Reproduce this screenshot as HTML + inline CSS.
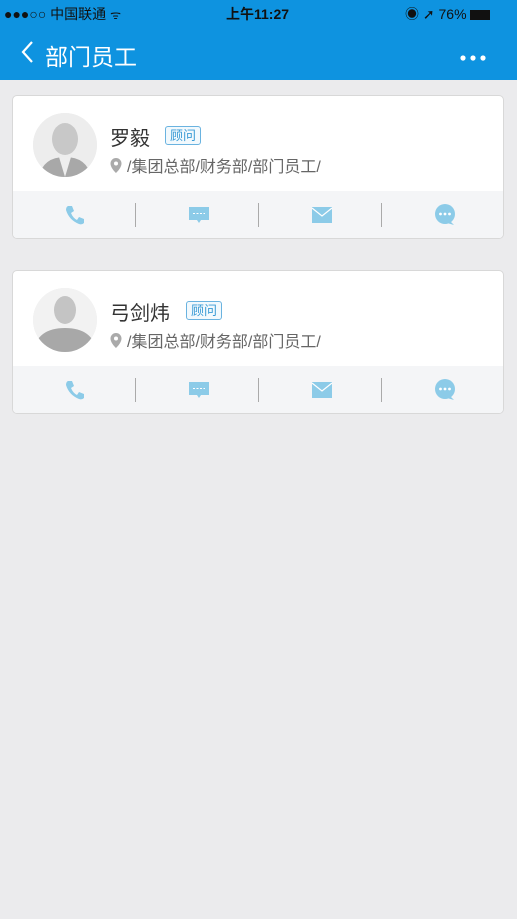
<!DOCTYPE html><html><head><meta charset="utf-8"><style>
body{margin:0;width:517px;height:919px;background:#ebebed;font-family:"Liberation Sans","Noto Sans CJK SC",sans-serif;position:relative;overflow:hidden}
.hdr{position:absolute;left:0;top:0;width:517px;height:80px;background:#0e93e0;color:#fff}
.sb{position:absolute;top:4px;font-size:14px;color:#111}
.card{position:absolute;left:12px;width:490px;height:142px;background:#fff;border:1px solid #d8d8d8;border-radius:5px;overflow:hidden}
.bot{position:absolute;left:0;top:95px;width:490px;height:47px;background:#f4f5f7}
.av{position:absolute;left:20px;top:17px;width:64px;height:64px;border-radius:50%;background:#eee;overflow:hidden}
.nm{position:absolute;top:26px;font-size:20px;color:#333}
.tag{position:absolute;top:30px;font-size:13px;color:#3a9bd5;border:1px solid #6ab3e0;border-radius:3px;padding:0 4px;line-height:17px;background:#f2f9fd}
.ad{position:absolute;left:97px;top:57px;font-size:16px;color:#666}
.dv{position:absolute;top:12px;width:1px;height:24px;background:#aaa}
.ic{position:absolute;top:12px}
</style></head><body>
<div class="hdr">
<div class="sb" style="left:4px">●●●○○ 中国联通 <span style="font-size:12px">ᯤ</span></div>
<div class="sb" style="left:226px;font-weight:bold">上午11:27</div>
<div class="sb" style="left:405px">◉ ➚ 76% <span style="display:inline-block;width:20px;height:10px;background:#111;vertical-align:middle"></span></div>
<svg style="position:absolute;left:20px;top:40px" width="14" height="24"><path d="M12 2 L3 12 L12 22" stroke="#fff" stroke-width="2.2" fill="none"/></svg>
<div style="position:absolute;left:45px;top:38px;font-size:23px">部门员工</div>
<div style="position:absolute;left:459px;top:49px;"><svg width="28" height="8"><circle cx="4" cy="4" r="2.6" fill="#fff"/><circle cx="14" cy="4" r="2.6" fill="#fff"/><circle cx="24" cy="4" r="2.6" fill="#fff"/></svg></div>
</div>

<div class="card" style="top:95px">
<div class="av"><svg width="64" height="64"><rect width="64" height="64" fill="#ededed"/><ellipse cx="32" cy="26" rx="13" ry="16" fill="#c8c8c8"/><path d="M6 64 Q10 44 32 44 Q54 44 58 64Z" fill="#a8a8a8"/><path d="M26 44 L32 64 L38 44Z" fill="#eee"/></svg></div>
<div class="nm" style="left:97px">罗毅</div><div class="tag" style="left:152px">顾问</div>
<div class="ad"><svg width="12" height="15" style="vertical-align:-1px;margin-right:5px"><path d="M6 0a5.5 5.5 0 0 0-5.5 5.5C.5 10 6 15 6 15s5.5-5 5.5-9.5A5.5 5.5 0 0 0 6 0z" fill="#aaa"/><circle cx="6" cy="5.5" r="2" fill="#fff"/></svg>/集团总部/财务部/部门员工/</div>
<div class="bot">
<svg class="ic" style="left:50px" width="24" height="24"><path d="M5 3 L9 3 L11 8 L8 10 Q10 15 14 17 L16 14 L21 16 L21 20 Q19 22 16 21 Q6 17 3 7 Q3 4 5 3Z" fill="#8ccbe8"/></svg>
<div class="dv" style="left:122px"></div>
<svg class="ic" style="left:174px" width="24" height="24"><path d="M2 4 H22 V17 H14 L12 20 L10 17 H2Z" fill="#8ccbe8"/><path d="M6 10.5 H18" stroke="#fff" stroke-dasharray="2 1.5"/></svg>
<div class="dv" style="left:245px"></div>
<svg class="ic" style="left:297px" width="24" height="24"><rect x="2" y="4" width="20" height="16" fill="#8ccbe8"/><path d="M2 5 L12 13 L22 5" stroke="#fff" fill="none" stroke-width="1.2"/></svg>
<div class="dv" style="left:368px"></div>
<svg class="ic" style="left:420px" width="24" height="24"><circle cx="12" cy="11" r="10" fill="#8ccbe8"/><path d="M17 18 L21 22 L14 20Z" fill="#8ccbe8"/><circle cx="7.5" cy="11" r="1.4" fill="#fff"/><circle cx="12" cy="11" r="1.4" fill="#fff"/><circle cx="16.5" cy="11" r="1.4" fill="#fff"/></svg>
</div></div>

<div class="card" style="top:270px">
<div class="av"><svg width="64" height="64"><rect width="64" height="64" fill="#f2f2f2"/><ellipse cx="32" cy="22" rx="11" ry="14" fill="#c4c4c4"/><path d="M0 64 Q4 40 32 40 Q60 40 64 64Z" fill="#a8a8a8"/></svg></div>
<div class="nm" style="left:97px">弓剑炜</div><div class="tag" style="left:173px">顾问</div>
<div class="ad"><svg width="12" height="15" style="vertical-align:-1px;margin-right:5px"><path d="M6 0a5.5 5.5 0 0 0-5.5 5.5C.5 10 6 15 6 15s5.5-5 5.5-9.5A5.5 5.5 0 0 0 6 0z" fill="#aaa"/><circle cx="6" cy="5.5" r="2" fill="#fff"/></svg>/集团总部/财务部/部门员工/</div>
<div class="bot">
<svg class="ic" style="left:50px" width="24" height="24"><path d="M5 3 L9 3 L11 8 L8 10 Q10 15 14 17 L16 14 L21 16 L21 20 Q19 22 16 21 Q6 17 3 7 Q3 4 5 3Z" fill="#8ccbe8"/></svg>
<div class="dv" style="left:122px"></div>
<svg class="ic" style="left:174px" width="24" height="24"><path d="M2 4 H22 V17 H14 L12 20 L10 17 H2Z" fill="#8ccbe8"/><path d="M6 10.5 H18" stroke="#fff" stroke-dasharray="2 1.5"/></svg>
<div class="dv" style="left:245px"></div>
<svg class="ic" style="left:297px" width="24" height="24"><rect x="2" y="4" width="20" height="16" fill="#8ccbe8"/><path d="M2 5 L12 13 L22 5" stroke="#fff" fill="none" stroke-width="1.2"/></svg>
<div class="dv" style="left:368px"></div>
<svg class="ic" style="left:420px" width="24" height="24"><circle cx="12" cy="11" r="10" fill="#8ccbe8"/><path d="M17 18 L21 22 L14 20Z" fill="#8ccbe8"/><circle cx="7.5" cy="11" r="1.4" fill="#fff"/><circle cx="12" cy="11" r="1.4" fill="#fff"/><circle cx="16.5" cy="11" r="1.4" fill="#fff"/></svg>
</div></div>
</body></html>
